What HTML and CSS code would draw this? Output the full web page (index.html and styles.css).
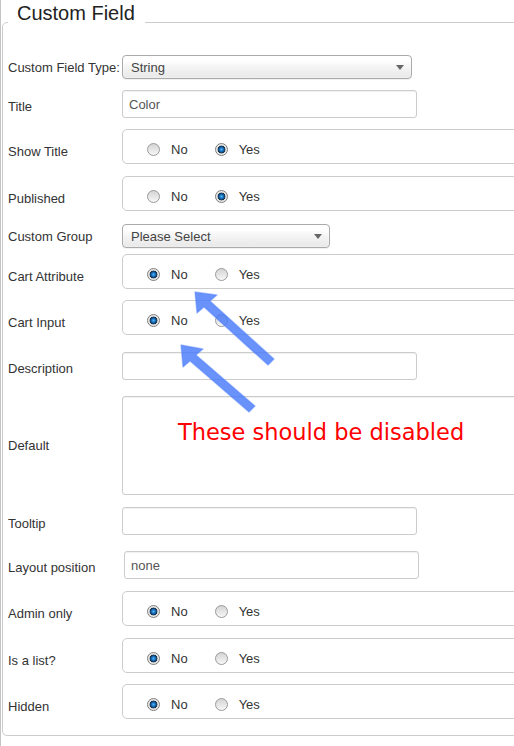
FILE: index.html
```html
<!DOCTYPE html>
<html>
<head>
<meta charset="utf-8">
<link rel="stylesheet" href="styles.css">
</head>
<body>
<div class="page">
  <fieldset class="panel">
    <legend class="legend">Custom Field</legend>

    <div class="row">
      <label class="lbl">Custom Field Type:</label>
      <div class="select w-type"><span>String</span><i class="caret"></i></div>
    </div>

    <div class="row mt11">
      <label class="lbl lbl-input">Title</label>
      <div class="input">Color</div>
    </div>

    <div class="row mt11">
      <label class="lbl lbl-radio">Show Title</label>
      <div class="radios">
        <label class="opt"><input type="radio" name="showtitle"><span>No</span></label>
        <label class="opt"><input type="radio" name="showtitle" checked><span>Yes</span></label>
      </div>
    </div>

    <div class="row mt12">
      <label class="lbl lbl-radio">Published</label>
      <div class="radios">
        <label class="opt"><input type="radio" name="published"><span>No</span></label>
        <label class="opt"><input type="radio" name="published" checked><span>Yes</span></label>
      </div>
    </div>

    <div class="row mt13">
      <label class="lbl">Custom Group</label>
      <div class="select w-group"><span>Please Select</span><i class="caret"></i></div>
    </div>

    <div class="row mt6">
      <label class="lbl lbl-radio">Cart Attribute</label>
      <div class="radios">
        <label class="opt"><input type="radio" name="cartattr" checked><span>No</span></label>
        <label class="opt"><input type="radio" name="cartattr"><span>Yes</span></label>
      </div>
    </div>

    <div class="row mt11">
      <label class="lbl lbl-radio">Cart Input</label>
      <div class="radios">
        <label class="opt"><input type="radio" name="cartinput" checked><span>No</span></label>
        <label class="opt"><input type="radio" name="cartinput"><span>Yes</span></label>
      </div>
    </div>

    <div class="row mt17">
      <label class="lbl lbl-input">Description</label>
      <div class="input"></div>
    </div>

    <div class="row mt16">
      <label class="lbl">Default</label>
      <div class="textarea"></div>
    </div>

    <div class="row mt12">
      <label class="lbl lbl-input">Tooltip</label>
      <div class="input"></div>
    </div>

    <div class="row mt16">
      <label class="lbl lbl-input">Layout position</label>
      <div class="input input-shift">none</div>
    </div>

    <div class="row mt12">
      <label class="lbl lbl-radio">Admin only</label>
      <div class="radios">
        <label class="opt"><input type="radio" name="admin" checked><span>No</span></label>
        <label class="opt"><input type="radio" name="admin"><span>Yes</span></label>
      </div>
    </div>

    <div class="row mt12">
      <label class="lbl lbl-radio">Is a list?</label>
      <div class="radios">
        <label class="opt"><input type="radio" name="islist" checked><span>No</span></label>
        <label class="opt"><input type="radio" name="islist"><span>Yes</span></label>
      </div>
    </div>

    <div class="row mt11">
      <label class="lbl lbl-radio">Hidden</label>
      <div class="radios">
        <label class="opt"><input type="radio" name="hidden" checked><span>No</span></label>
        <label class="opt"><input type="radio" name="hidden"><span>Yes</span></label>
      </div>
    </div>
  </fieldset>

  <div class="note">These should be disabled</div>

  <svg class="arrows" width="514" height="746" viewBox="0 0 514 746">
    <g class="arrow">
      <polygon points="195,292 217,295 210,301 274,359 268,365 204,307 197,313"/>
      <polygon points="181,345 203,349 196,355 255,406 249,412 190,361 183,367"/>
    </g>
  </svg>
</div>
</body>
</html>
```

FILE: styles.css
```css
html, body {
  margin: 0;
  padding: 0;
  background: #fff;
  overflow: hidden;
}

body {
  width: 514px;
  height: 746px;
  font-family: "Liberation Sans", Arial, sans-serif;
  font-size: 13px;
  color: #333;
}

.page {
  position: relative;
  width: 513px;
  height: 746px;
  overflow: hidden;
  border-left: 1px solid #c4c4c4;
}

.panel {
  margin: 0 0 0 1px;
  width: 620px;
  border: 1px solid #cccccc;
  border-radius: 5px;
  padding: 11px 0 16px 5px;
  min-width: 0;
}

.legend {
  font-size: 20px;
  line-height: 26px;
  color: #222;
  padding: 0 10px 18px 9px;
}

.row {
  display: grid;
  grid-template-columns: 114px 1fr;
  align-items: center;
}

.mt6 { margin-top: 6px; }
.mt11 { margin-top: 11px; }
.mt12 { margin-top: 12px; }
.mt13 { margin-top: 13px; }
.mt16 { margin-top: 16px; }
.mt17 { margin-top: 17px; }

.lbl {
  font-size: 13px;
  color: #333;
  white-space: nowrap;
  line-height: 15px;
}

.lbl-input { padding-top: 4px; }
.lbl-radio { padding-top: 10px; }

.select {
  box-sizing: border-box;
  height: 24px;
  border: 1px solid #aaa;
  border-radius: 4px;
  background: linear-gradient(#ffffff 20%, #f4f4f4 50%, #e8e8e8 100%);
  display: flex;
  align-items: center;
  justify-content: space-between;
  padding: 0 7px 0 8px;
  color: #444;
  box-shadow: 0 0 2px #fff inset, 0 1px 0 rgba(0,0,0,0.05);
}

.w-type { width: 290px; }
.w-group { width: 208px; }

.caret {
  width: 0;
  height: 0;
  border-left: 4px solid transparent;
  border-right: 4px solid transparent;
  border-top: 5px solid #666;
  margin-top: 1px;
}

.input {
  box-sizing: border-box;
  width: 295px;
  height: 28px;
  border: 1px solid #ccc;
  border-radius: 3px;
  padding: 0 6px;
  display: flex;
  align-items: center;
  color: #555;
  box-shadow: inset 0 1px 1px rgba(0,0,0,0.06);
}

.input-shift { margin-left: 2px; }

.textarea {
  box-sizing: border-box;
  height: 99px;
  border: 1px solid #ccc;
  border-radius: 3px;
  box-shadow: inset 0 1px 1px rgba(0,0,0,0.06);
}

.radios {
  box-sizing: border-box;
  height: 35px;
  border: 1px solid #ccc;
  border-radius: 5px;
  padding: 5px 0 0 24px;
  display: flex;
  align-items: center;
}

.opt {
  display: flex;
  align-items: center;
  gap: 11px;
  margin-right: 27px;
  color: #333;
  line-height: 15px;
}

.opt input {
  -webkit-appearance: none;
  appearance: none;
  margin: 0;
  width: 13px;
  height: 13px;
  border-radius: 50%;
  border: 1px solid #9a9a9a;
  background: linear-gradient(#d4d4d4, #f7f7f7);
  box-sizing: border-box;
}

.opt input:checked {
  border-color: #7d7d7d;
  background: radial-gradient(circle at 50% 50%, #58b4f2 0, #1a76c4 1.8px, #0d4c86 2.8px, #1f2f40 3.6px, #dcdcdc 4.2px, #f4f4f4 6px);
}

.note {
  position: absolute;
  left: 177px;
  top: 419px;
  font-family: "DejaVu Sans", Verdana, sans-serif;
  font-size: 22.5px;
  line-height: 26px;
  color: #ff0000;
  white-space: nowrap;
}

.arrows {
  position: absolute;
  left: -1px;
  top: 0;
  pointer-events: none;
}

.arrow polygon {
  fill: rgba(72, 122, 250, 0.82);
  stroke: rgba(72, 122, 250, 0.4);
  stroke-width: 1.5;
  stroke-linejoin: round;
}
```
